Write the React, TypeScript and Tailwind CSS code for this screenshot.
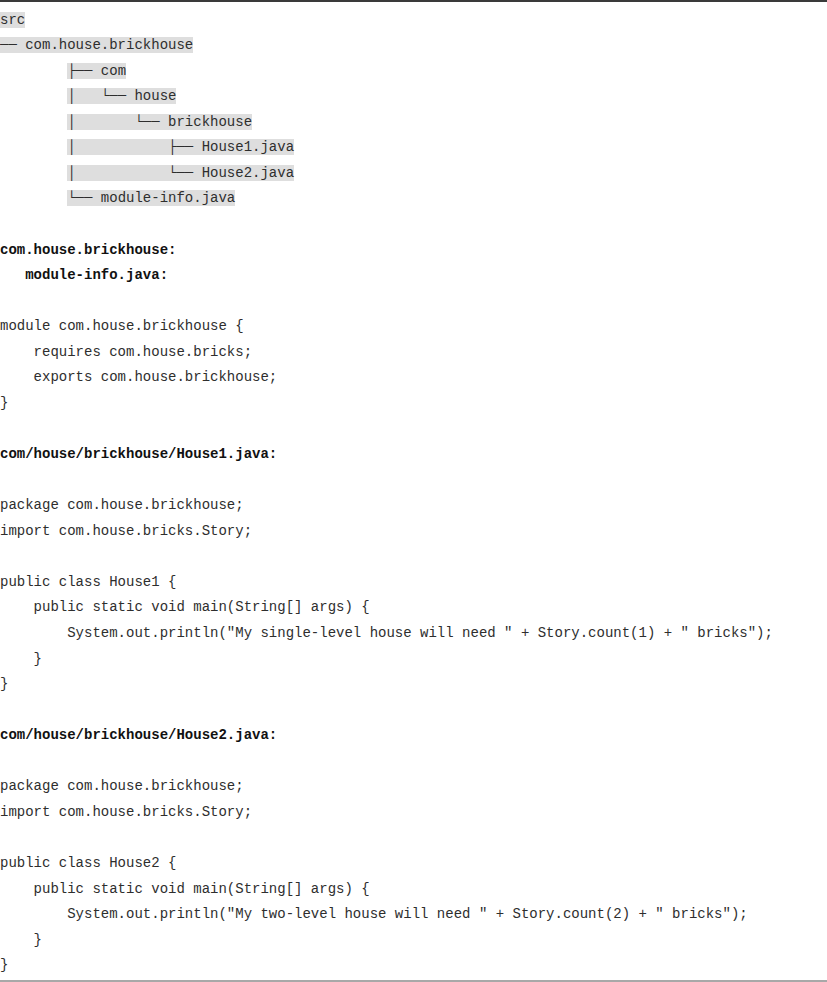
const tree: [string, string][] = [
  ["", "src"],
  ["", "── com.house.brickhouse"],
  ["        ", "├── com"],
  ["        ", "│   └── house"],
  ["        ", "│       └── brickhouse"],
  ["        ", "│           ├── House1.java"],
  ["        ", "│           └── House2.java"],
  ["        ", "└── module-info.java"],
];

// b = bold heading line, plain string = code line
type Line = string | { b: string };

const body: Line[] = [
  "",
  { b: "com.house.brickhouse:" },
  { b: "   module-info.java:" },
  "",
  "module com.house.brickhouse {",
  "    requires com.house.bricks;",
  "    exports com.house.brickhouse;",
  "}",
  "",
  { b: "com/house/brickhouse/House1.java:" },
  "",
  "package com.house.brickhouse;",
  "import com.house.bricks.Story;",
  "",
  "public class House1 {",
  "    public static void main(String[] args) {",
  '        System.out.println("My single-level house will need " + Story.count(1) + " bricks");',
  "    }",
  "}",
  "",
  { b: "com/house/brickhouse/House2.java:" },
  "",
  "package com.house.brickhouse;",
  "import com.house.bricks.Story;",
  "",
  "public class House2 {",
  "    public static void main(String[] args) {",
  '        System.out.println("My two-level house will need " + Story.count(2) + " bricks");',
  "    }",
  "}",
];

export default function App() {
  return (
    <div className="w-[827px] h-[982px] bg-white overflow-hidden">
      <div
        className="border-t-2 border-b-2 border-t-[#3a3a3a] border-b-[#a8a8a8] pt-[5.5px] pb-[1.5px] text-[14px] leading-[25.57px] text-[#2e2e2e] whitespace-pre"
        style={{ fontFamily: '"Liberation Mono", "DejaVu Sans Mono", monospace' }}
      >
        {tree.map(([indent, text], i) => (
          <div key={"t" + i} className="h-[25.57px]">
            {indent}
            <span className="bg-[#dedede]">{text}</span>
          </div>
        ))}
        {body.map((line, i) =>
          typeof line === "string" ? (
            <div key={"b" + i} className="h-[25.57px]">
              {line}
            </div>
          ) : (
            <div key={"b" + i} className="h-[25.57px] font-bold text-[#111]">
              {line.b}
            </div>
          )
        )}
      </div>
    </div>
  );
}
